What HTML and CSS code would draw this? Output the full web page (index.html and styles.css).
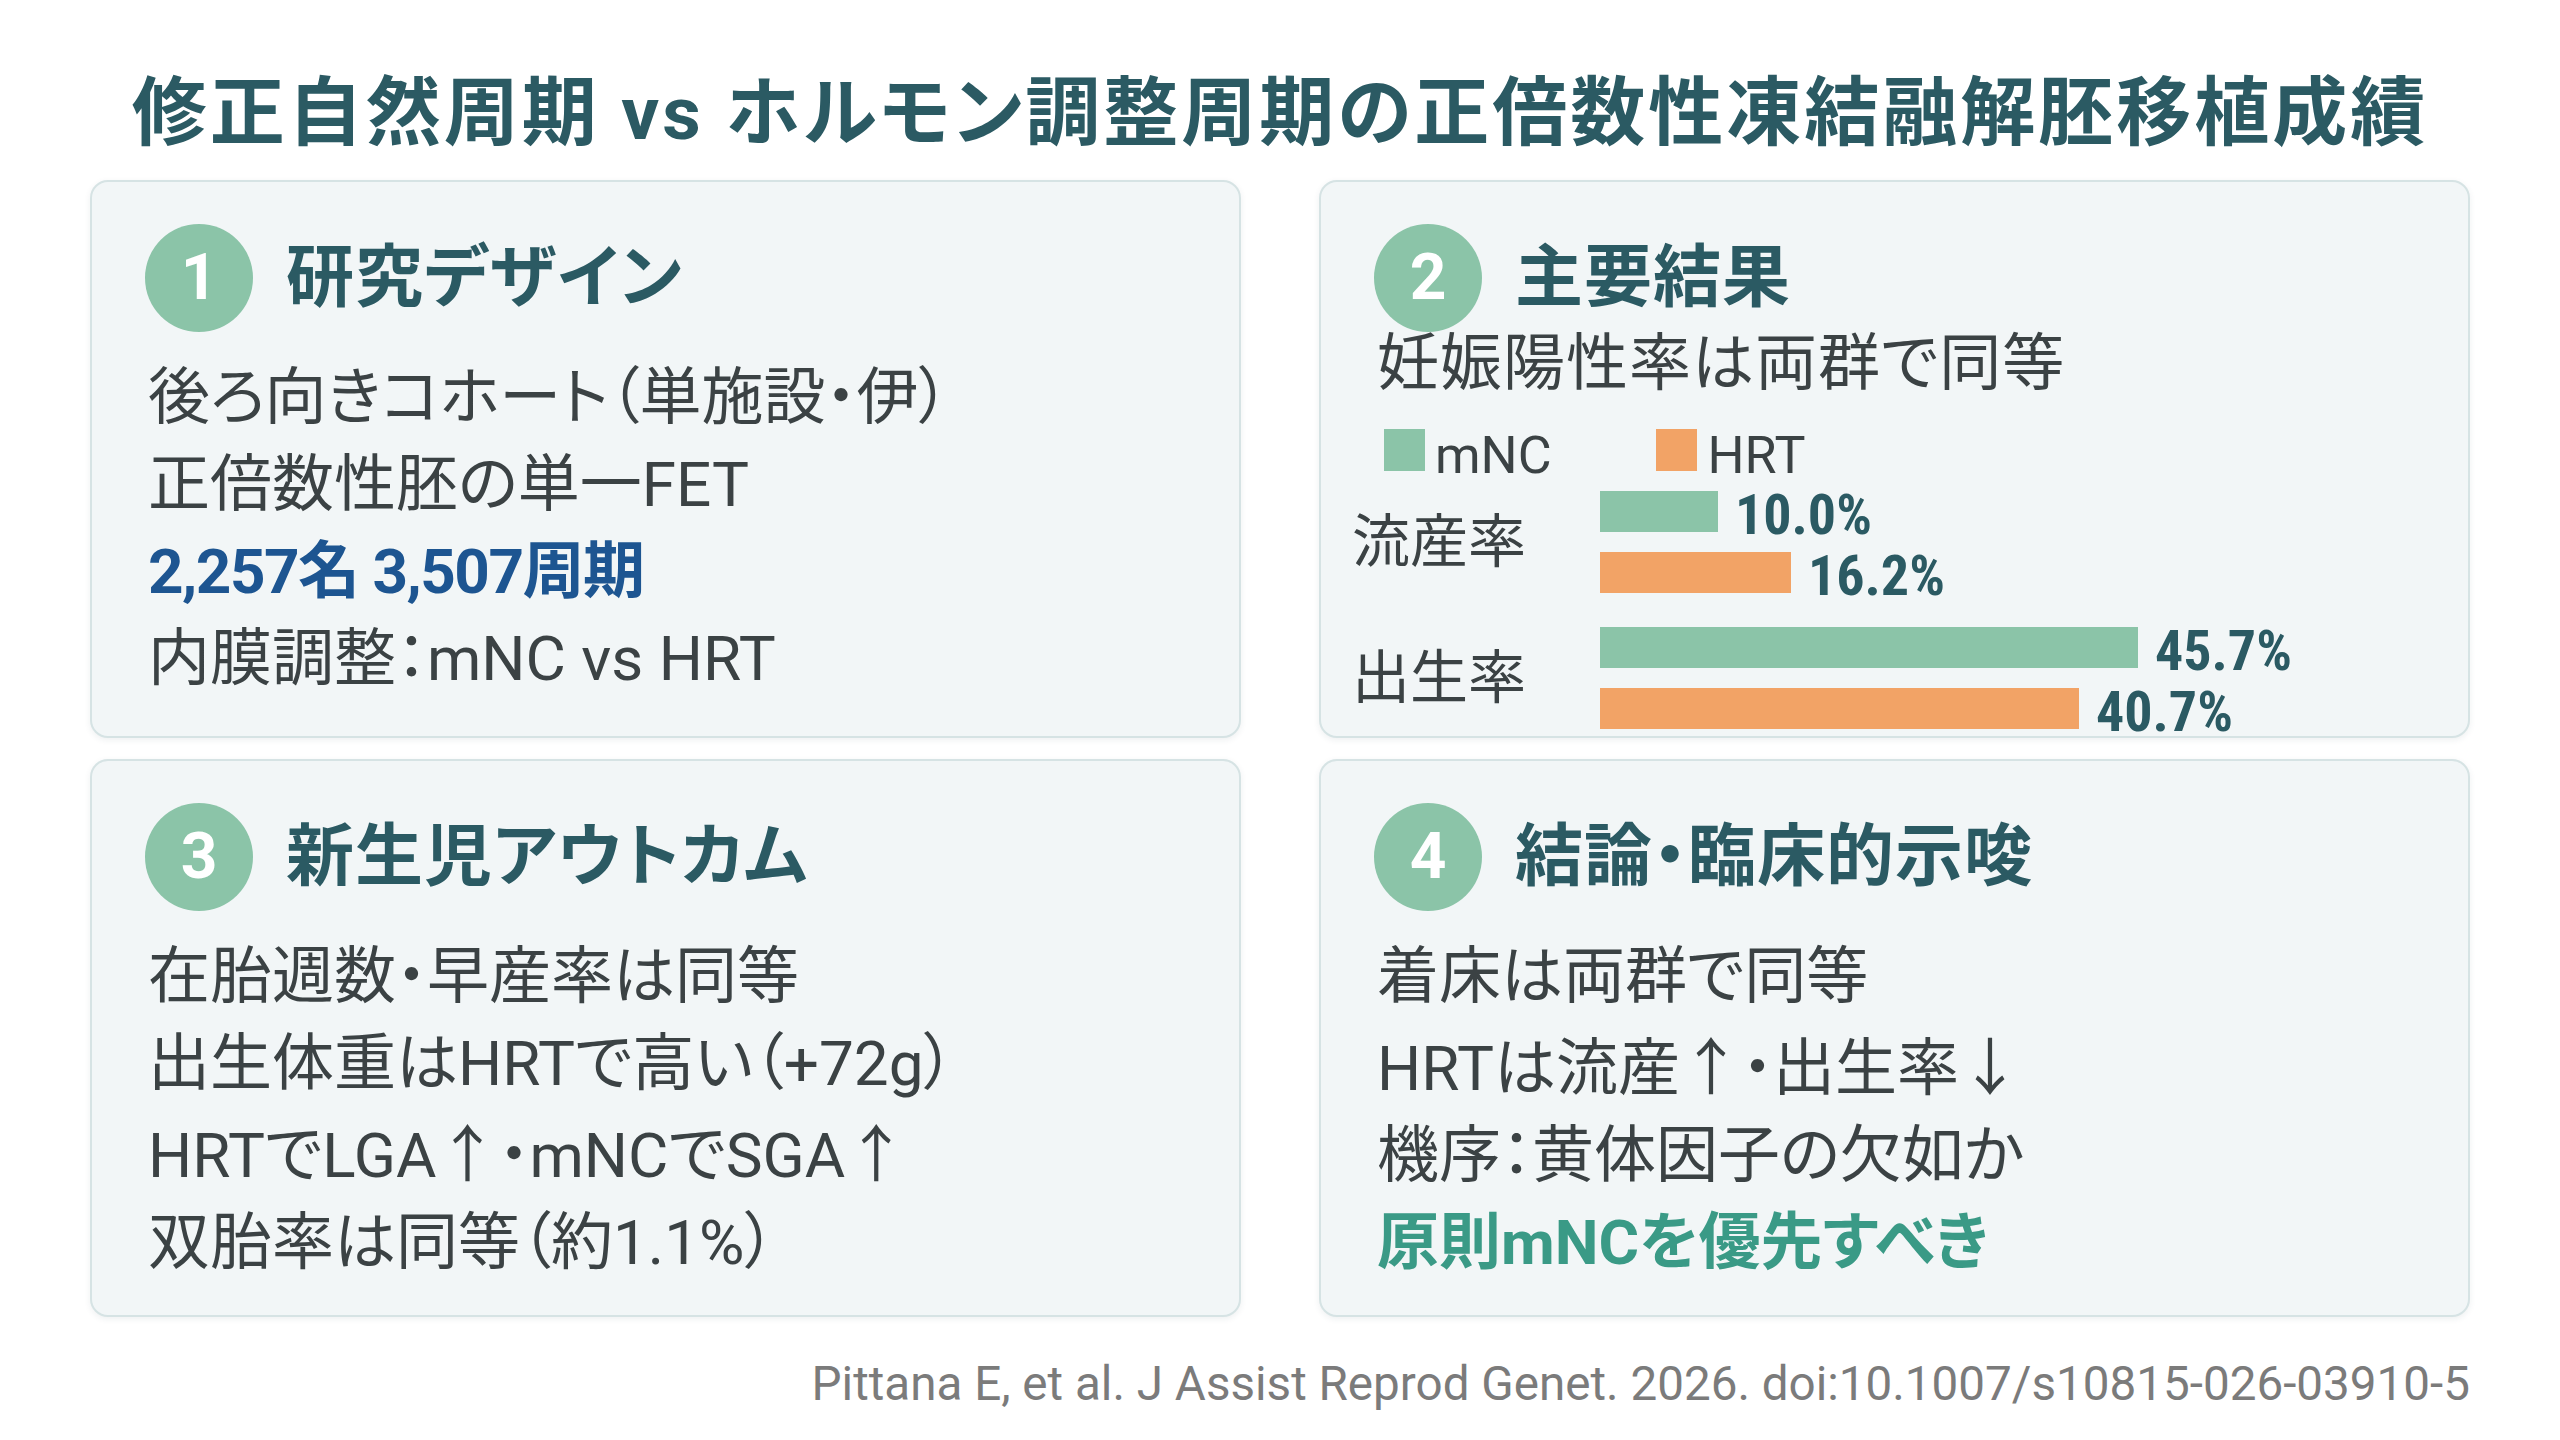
FILE: index.html
```html
<!DOCTYPE html>
<html lang="ja">
<head>
<meta charset="utf-8">
<title>修正自然周期 vs ホルモン調整周期</title>
<link rel="stylesheet" href="styles.css">
</head>
<body>
<div class="page">
  <h1 class="title">修正自然周期 vs ホルモン調整周期の正倍数性凍結融解胚移植成績</h1>
  <div class="grid">
    <section class="card">
      <div class="head"><span class="badge">1</span><h2>研究デザイン</h2></div>
      <div class="lines">
        <p>後ろ向きコホート（単施設・伊）</p>
        <p>正倍数性胚の単一FET</p>
        <p class="blue">2,257名 3,507周期</p>
        <p>内膜調整：mNC vs HRT</p>
      </div>
    </section>
    <section class="card">
      <div class="head"><span class="badge">2</span><h2>主要結果</h2></div>
      <p class="sub">妊娠陽性率は両群で同等</p>
      <div class="legend">
        <span class="item"><i class="sw g"></i>mNC</span>
        <span class="item"><i class="sw o"></i>HRT</span>
      </div>
      <div class="chart">
        <div class="grp">
          <div class="lbl">流産率</div>
          <div class="bars">
            <div class="row"><div class="bar g" style="width:118px"></div><span class="val">10.0%</span></div>
            <div class="row"><div class="bar o" style="width:191px"></div><span class="val">16.2%</span></div>
          </div>
        </div>
        <div class="grp">
          <div class="lbl">出生率</div>
          <div class="bars">
            <div class="row"><div class="bar g" style="width:538px"></div><span class="val">45.7%</span></div>
            <div class="row"><div class="bar o" style="width:479px"></div><span class="val">40.7%</span></div>
          </div>
        </div>
      </div>
    </section>
    <section class="card">
      <div class="head"><span class="badge">3</span><h2>新生児アウトカム</h2></div>
      <div class="lines">
        <p>在胎週数・早産率は同等</p>
        <p>出生体重はHRTで高い（+72g）</p>
        <p>HRTでLGA<span class="ar">↑</span>・mNCでSGA<span class="ar">↑</span></p>
        <p>双胎率は同等（約1.1%）</p>
      </div>
    </section>
    <section class="card">
      <div class="head"><span class="badge">4</span><h2>結論・臨床的示唆</h2></div>
      <div class="lines">
        <p>着床は両群で同等</p>
        <p>HRTは流産<span class="ar">↑</span>・出生率<span class="ar">↓</span></p>
        <p>機序：黄体因子の欠如か</p>
        <p class="green">原則mNCを優先すべき</p>
      </div>
    </section>
  </div>
  <div class="cite">Pittana E, et al. J Assist Reprod Genet. 2026. doi:10.1007/s10815-026-03910-5</div>
</div>
</body>
</html>
```

FILE: styles.css
```css
html, body {
  margin: 0;
  background: #ffffff;
}
body {
  font-family: Roboto, "Noto Sans CJK JP", sans-serif;
  font-feature-settings: "palt";
  color: #3b4244;
}
.page {
  width: 2560px;
  height: 1440px;
  box-sizing: border-box;
  padding: 68px 90px 0;
}
.title {
  margin: 0;
  font-size: 75px;
  line-height: 90px;
  font-weight: 700;
  color: #2b5a63;
  text-align: center;
  letter-spacing: 3px;
  white-space: nowrap;
}
.grid {
  margin-top: 22px;
  display: grid;
  grid-template-columns: 1fr 1fr;
  grid-auto-rows: 558px;
  column-gap: 78px;
  row-gap: 21px;
}
.card {
  box-sizing: border-box;
  background: #f2f6f7;
  border: 2px solid #d6e3e4;
  border-radius: 18px;
  box-shadow: 0 2px 6px rgba(40, 70, 80, 0.08);
  padding: 42px 40px 0 53px;
}
.head {
  display: flex;
  align-items: center;
  gap: 33px;
  height: 108px;
}
.badge {
  flex: none;
  width: 108px;
  height: 108px;
  border-radius: 50%;
  background: #8bc4a8;
  color: #ffffff;
  font-family: Roboto, sans-serif;
  font-weight: 700;
  font-size: 64px;
  line-height: 1;
  display: flex;
  align-items: center;
  justify-content: center;
}
.head h2 {
  margin: 0;
  font-size: 68px;
  line-height: 1;
  font-weight: 700;
  color: #2b5a63;
  white-space: nowrap;
  letter-spacing: 1px;
}
.lines {
  margin-top: 22px;
  padding-left: 3px;
}
.lines p {
  margin: 0;
  font-size: 62px;
  line-height: 87px;
  white-space: nowrap;
}
.lines p.blue {
  color: #1d5591;
  font-weight: 700;
  letter-spacing: -1.5px;
}
.lines p.green {
  color: #3a9a86;
  font-weight: 700;
}
.ar {
  font-family: "Noto Sans CJK JP", sans-serif;
}
.sub {
  margin: -12px 0 0;
  padding-left: 3px;
  font-size: 62px;
  line-height: 87px;
  white-space: nowrap;
  letter-spacing: 1px;
}
.legend {
  margin-top: 22px;
  padding-left: 10px;
  font-size: 52px;
  line-height: 52px;
  height: 52px;
  white-space: nowrap;
}
.item {
  display: inline-block;
  margin-right: 92px;
}
.sw {
  display: inline-block;
  width: 41px;
  height: 42px;
  margin-right: 10px;
  vertical-align: 2px;
}
.g { background: #8bc4a8; }
.o { background: #f2a366; }
.chart {
  margin: 10px 0 0 -22px;
  display: flex;
  flex-direction: column;
  gap: 34px;
}
.grp {
  display: flex;
  align-items: center;
}
.lbl {
  flex: none;
  width: 248px;
  font-size: 58px;
  line-height: 1;
  white-space: nowrap;
}
.bars {
  display: flex;
  flex-direction: column;
  gap: 20px;
}
.row {
  display: flex;
  align-items: center;
  height: 41px;
}
.bar {
  height: 41px;
  flex: none;
}
.val {
  margin-left: 17px;
  padding-top: 6px;
  font-family: "Roboto Condensed", "Liberation Sans Narrow", Roboto, sans-serif;
  font-weight: 700;
  font-size: 56px;
  line-height: 1;
  color: #2b5a63;
  white-space: nowrap;
}
.cite {
  margin-top: 39px;
  text-align: right;
  font-size: 47.6px;
  line-height: 56px;
  color: #7b7b7b;
  white-space: nowrap;
}
```
